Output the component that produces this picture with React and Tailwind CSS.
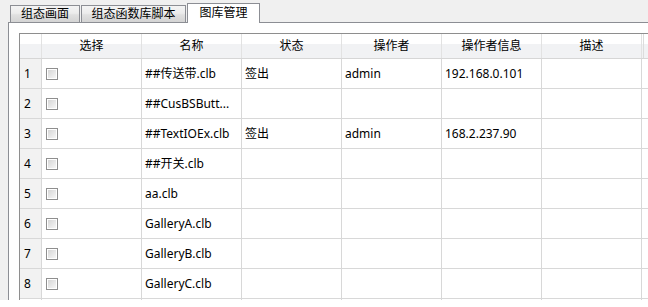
import React from "react";

const cols = ["选择", "名称", "状态", "操作者", "操作者信息", "描述"];

const rows = [
  { n: "1", name: "##传送带.clb", state: "签出", op: "admin", info: "192.168.0.101" },
  { n: "2", name: "##CusBSButt...", state: "", op: "", info: "" },
  { n: "3", name: "##TextIOEx.clb", state: "签出", op: "admin", info: "168.2.237.90" },
  { n: "4", name: "##开关.clb", state: "", op: "", info: "" },
  { n: "5", name: "aa.clb", state: "", op: "", info: "" },
  { n: "6", name: "GalleryA.clb", state: "", op: "", info: "" },
  { n: "7", name: "GalleryB.clb", state: "", op: "", info: "" },
  { n: "8", name: "GalleryC.clb", state: "", op: "", info: "" },
  { n: "", name: "", state: "", op: "", info: "" },
];

function Checkbox() {
  return (
    <div className="w-[12px] h-[12px] border border-[#8f8f8f] bg-white p-px">
      <div className="w-full h-full bg-[linear-gradient(135deg,#d6d6d6,#f6f6f6)]" />
    </div>
  );
}

function Tab({ label, active, w }) {
  if (active) {
    return (
      <div
        className={`${w} h-[20px] -mb-px relative z-10 border border-b-0 border-[#8c8e94] bg-white flex items-center justify-center text-[12px] text-black leading-none`}
      >
        <span className="-mt-[1px]">{label}</span>
      </div>
    );
  }
  return (
    <div
      className={`${w} h-[17px] border border-b-0 border-[#8c8e94] bg-[linear-gradient(to_bottom,#f4f4f4_0%,#ececec_45%,#e0e0e0_55%,#d4d4d4_100%)] flex items-center justify-center text-[12px] text-black leading-none`}
    >
      <span>{label}</span>
    </div>
  );
}

export default function App() {
  return (
    <div
      className="w-[648px] h-[307px] bg-white overflow-hidden"
      style={{ fontFamily: "'Noto Sans', 'Noto Sans CJK SC', sans-serif" }}
    >
      <div className="h-[300px] bg-[#f0f0f0] flex flex-col overflow-hidden">
        <div className="h-[22px] flex items-end pl-[10px] gap-[1px] shrink-0">
          <Tab label="组态画面" w="w-[70px]" />
          <Tab label="组态函数库脚本" w="w-[105px]" />
          <Tab label="图库管理" w="w-[73px]" active />
        </div>
        <div className="flex-1 ml-[8px] border-l border-t border-[#8c8e94] bg-white pl-[10px] pt-[10px] overflow-hidden">
          <div className="border-l border-t border-[#8e8e8e] w-[800px] text-[12px] text-black">
            {/* header */}
            <div className="flex h-[25px] border-b border-[#d6d6d6] bg-[linear-gradient(to_bottom,#ffffff_0%,#ffffff_40%,#f1f2f4_40%,#f1f2f4_100%)]">
              <div className="w-[22px] shrink-0 border-r border-[#e2e2e2]" />
              {cols.map((c) => (
                <div
                  key={c}
                  className="w-[100px] shrink-0 border-r border-[#e2e2e2] flex items-center justify-center leading-none"
                >
                  {c}
                </div>
              ))}
              <div className="w-[2px] shrink-0 border-r border-[#dcdcdc]" />
              <div className="flex-1" />
            </div>
            {rows.map((r, i) => (
              <div key={i} className="flex h-[30px] border-b border-[#d8d8d8]">
                <div
                  className={`w-[22px] shrink-0 border-r border-[#d8d8d8] flex items-center pl-[4px] leading-none ${
                    r.n ? "bg-[#f2f2f2]" : "bg-white"
                  }`}
                >
                  {r.n}
                </div>
                <div className="w-[100px] shrink-0 border-r border-[#d8d8d8] flex items-center pl-[4px]">
                  {r.n && <Checkbox />}
                </div>
                <div className="w-[100px] shrink-0 border-r border-[#d8d8d8] flex items-center pl-[3px] whitespace-nowrap overflow-hidden leading-none">
                  {r.name}
                </div>
                <div className="w-[100px] shrink-0 border-r border-[#d8d8d8] flex items-center pl-[3px] leading-none">
                  {r.state}
                </div>
                <div className="w-[100px] shrink-0 border-r border-[#d8d8d8] flex items-center pl-[3px] leading-none">
                  {r.op}
                </div>
                <div className="w-[100px] shrink-0 border-r border-[#d8d8d8] flex items-center pl-[3px] leading-none">
                  {r.info}
                </div>
                <div className="w-[100px] shrink-0 border-r border-[#d8d8d8]" />
                <div className="flex-1" />
              </div>
            ))}
          </div>
        </div>
      </div>
    </div>
  );
}
